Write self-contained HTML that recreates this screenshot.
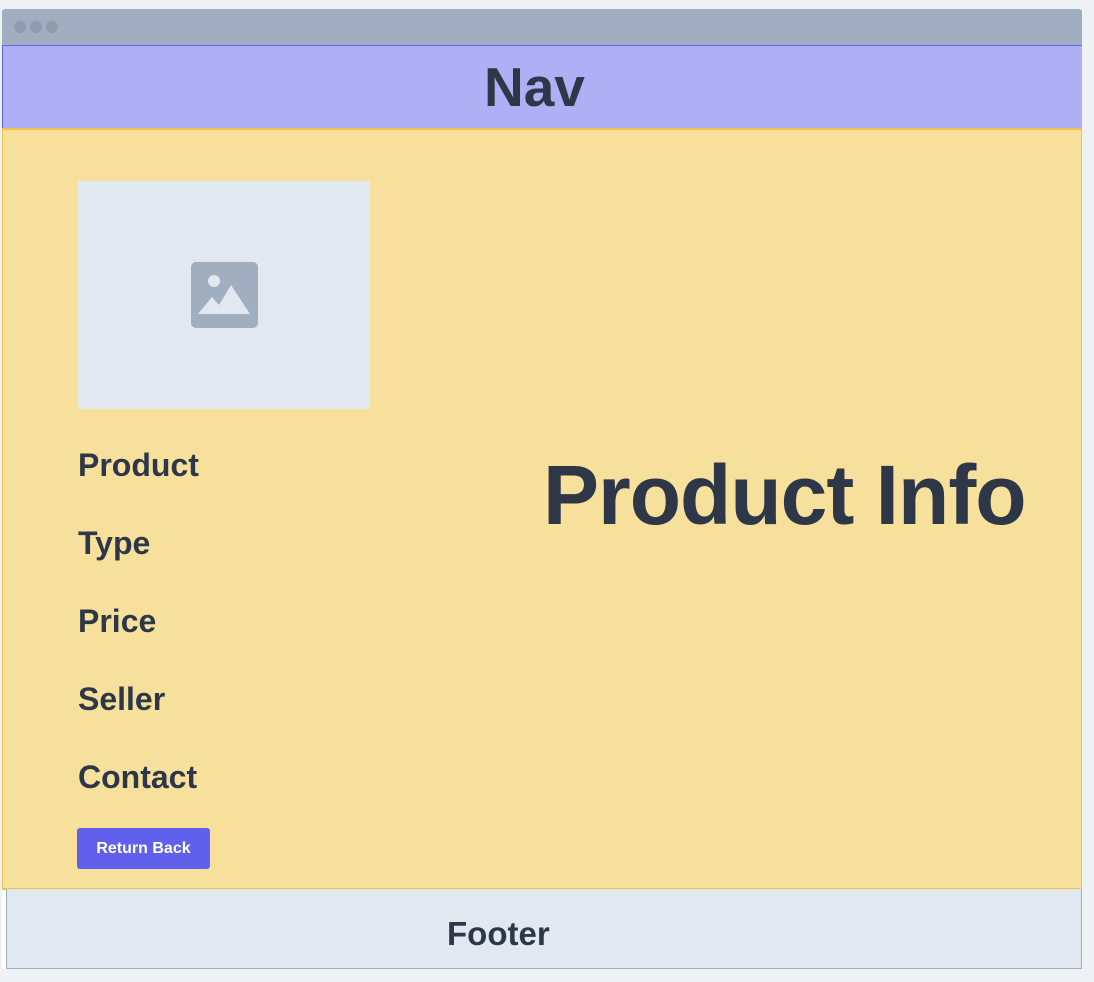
<!DOCTYPE html>
<html><head><style>
*{margin:0;padding:0;box-sizing:border-box}
body{width:1094px;height:982px;background:#eef2f5;position:relative;overflow:hidden;font-family:"Liberation Sans",sans-serif;color:#2d3748}
.tb{position:absolute;left:2px;top:9px;width:1080px;height:36px;background:#a0aec0;border-radius:3px 3px 0 0}
.dot{position:absolute;top:12px;width:12px;height:12px;border-radius:50%;background:#909cac}
.nav{position:absolute;left:2px;top:45px;width:1080px;height:84px;background:#b0aef4;border-left:1px solid #6366f1;border-top:1px solid #6366f1;font-weight:bold;font-size:55px;line-height:82px}
.nav span{position:absolute;left:481px;top:0}
.main{position:absolute;left:2px;top:128px;width:1080px;height:762px;background:#f7e09b;border:1px solid #f0c24a;border-top:2px solid #f0c24a;border-bottom:2px solid #f0c24a}
.strip{position:absolute;left:2px;top:890px;width:5px;height:79px;background:#fff}
.foot{position:absolute;left:6px;top:889px;width:1076px;height:80px;background:#e2e8f0;border:1px solid #a0aec0;border-top:none;font-weight:bold;font-size:33px;line-height:90px}
.foot span{position:absolute;left:440px;top:0}
.img{position:absolute;left:78px;top:181px;width:292px;height:228px;background:#e2e8f0}
.lbl{position:absolute;left:78px;font-weight:bold;font-size:32px;line-height:30px}
.btn{position:absolute;left:77px;top:828px;width:133px;height:41px;background:#6160ec;border-radius:3px;color:#fff;font-size:16px;line-height:41px;text-align:center;font-weight:bold}
.pi{position:absolute;left:543px;top:445px;font-weight:bold;font-size:84px;line-height:100px;white-space:nowrap;letter-spacing:-1px}
</style></head><body>
<div class="tb"><div class="dot" style="left:12px"></div><div class="dot" style="left:28px"></div><div class="dot" style="left:44px"></div></div>
<div class="nav"><span>Nav</span></div>
<div class="main"></div>
<div class="img"></div>
<svg style="position:absolute;left:0;top:0" width="1094" height="982">
<rect x="191" y="262" width="67" height="66" rx="5" fill="#a0aec0"/>
<circle cx="214" cy="281" r="6" fill="#e2e8f0"/>
<path d="M198 314 L212 297 L219 305 L231 285 L250 314 Z" fill="#e2e8f0"/>
</svg>
<div class="lbl" style="top:450px">Product</div>
<div class="lbl" style="top:528px">Type</div>
<div class="lbl" style="top:606px">Price</div>
<div class="lbl" style="top:684px">Seller</div>
<div class="lbl" style="top:762px">Contact</div>
<div class="btn">Return Back</div>
<div class="pi">Product Info</div>
<div class="strip"></div>
<div class="foot"><span>Footer</span></div>
</body></html>
